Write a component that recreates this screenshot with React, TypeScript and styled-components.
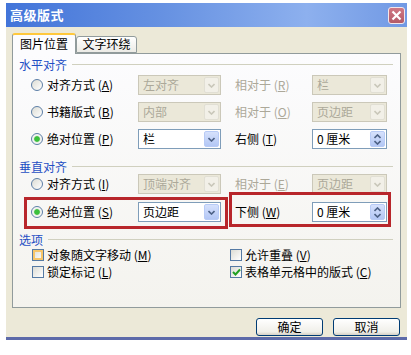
import React from 'react'
import styled, { createGlobalStyle } from 'styled-components'

const GlobalStyle = createGlobalStyle`
    html, body {
        margin: 0;
        padding: 0;
        background: #ffffff;
    }
    body {
        font-family: "Noto Sans CJK SC", "Liberation Sans", sans-serif;
        font-size: 12px;
        color: #000;
    }
`

type Line = {
    label: string
    hotkey: string
    checked: boolean
    value: string
    valueDisabled: boolean
    side: string
    sideKey: string
    sideDisabled: boolean
    sideValue: string
    spin?: boolean
    top: number
}

const horizontal: Line[] = [
    { label: '对齐方式', hotkey: 'A', checked: false, value: '左对齐', valueDisabled: true, side: '相对于', sideKey: 'R', sideDisabled: true, sideValue: '栏', top: 3 },
    { label: '书籍版式', hotkey: 'B', checked: false, value: '内部', valueDisabled: true, side: '相对于', sideKey: 'O', sideDisabled: true, sideValue: '页边距', top: 7 },
    { label: '绝对位置', hotkey: 'P', checked: true, value: '栏', valueDisabled: false, side: '右侧', sideKey: 'T', sideDisabled: false, sideValue: '0 厘米', spin: true, top: 7 },
]

const vertical: Line[] = [
    { label: '对齐方式', hotkey: 'I', checked: false, value: '顶端对齐', valueDisabled: true, side: '相对于', sideKey: 'E', sideDisabled: true, sideValue: '页边距', top: 0 },
    { label: '绝对位置', hotkey: 'S', checked: true, value: '页边距', valueDisabled: false, side: '下侧', sideKey: 'W', sideDisabled: false, sideValue: '0 厘米', spin: true, top: 8 },
]

function Chevron({ up, disabled }: { up?: boolean; disabled?: boolean }) {
    return (
        <svg width="7" height="5" viewBox="0 0 7 5">
            <path
                d={up ? 'M0.5 4 L3.5 1 L6.5 4' : 'M0.5 1 L3.5 4 L6.5 1'}
                fill="none"
                stroke={disabled ? '#c9c7ba' : '#4d6185'}
                strokeWidth="1.6"
            />
        </svg>
    )
}

function Dropdown({ value, disabled }: { value: string; disabled: boolean }) {
    return (
        <Select $disabled={disabled} $width={83}>
            <SelectValue $disabled={disabled}>{value}</SelectValue>
            <ArrowBox $disabled={disabled}>
                <Chevron disabled={disabled} />
            </ArrowBox>
        </Select>
    )
}

function SideControl({ line }: { line: Line }) {
    if (line.spin) {
        return (
            <Select $disabled={false} $width={75}>
                <SelectValue $disabled={false}>{line.sideValue}</SelectValue>
                <ArrowBox $disabled={false} $spin>
                    <Chevron up />
                    <Chevron />
                </ArrowBox>
            </Select>
        )
    }
    return (
        <Select $disabled={line.sideDisabled} $width={75}>
            <SelectValue $disabled={line.sideDisabled}>{line.sideValue}</SelectValue>
            <ArrowBox $disabled={line.sideDisabled}>
                <Chevron disabled={line.sideDisabled} />
            </ArrowBox>
        </Select>
    )
}

function OptionRow({ line }: { line: Line }) {
    return (
        <Row $top={line.top}>
            <RadioOption>
                <Radio $checked={line.checked} />
                <Label>
                    {line.label} (<u>{line.hotkey}</u>)
                </Label>
            </RadioOption>
            <Dropdown value={line.value} disabled={line.valueDisabled} />
            <SideLabel $disabled={line.sideDisabled}>
                {line.side} (<u>{line.sideKey}</u>)
            </SideLabel>
            <SideControl line={line} />
        </Row>
    )
}

export default function App() {
    return (
        <>
            <GlobalStyle />
            <Window>
                <TitleBar>
                    <Title>高级版式</Title>
                    <CloseButton>
                        <svg width="11" height="11" viewBox="0 0 11 11">
                            <path d="M1.5 1.5 L9.5 9.5 M9.5 1.5 L1.5 9.5" stroke="#fff" strokeWidth="2.2" />
                        </svg>
                    </CloseButton>
                </TitleBar>
                <Body>
                    <TabBar>
                        <Tab $active>图片位置</Tab>
                        <Tab>文字环绕</Tab>
                    </TabBar>
                    <Panel>
                        <SectionTitle $top={0}>水平对齐</SectionTitle>
                        {horizontal.map((line, key) => (
                            <OptionRow key={key} line={line} />
                        ))}
                        <SectionTitle $top={11}>垂直对齐</SectionTitle>
                        {vertical.map((line, key) => (
                            <OptionRow key={key} line={line} />
                        ))}
                        <SectionTitle $top={11}>选项</SectionTitle>
                        <CheckGrid>
                            <CheckItem>
                                <CheckBox $hover />
                                <Label>对象随文字移动 (<u>M</u>)</Label>
                            </CheckItem>
                            <CheckItem>
                                <CheckBox />
                                <Label>允许重叠 (<u>V</u>)</Label>
                            </CheckItem>
                            <CheckItem>
                                <CheckBox />
                                <Label>锁定标记 (<u>L</u>)</Label>
                            </CheckItem>
                            <CheckItem>
                                <CheckBox>
                                    <svg width="9" height="8" viewBox="0 0 9 8">
                                        <path d="M1 4 L3.5 6.5 L8 1.5" fill="none" stroke="#21a121" strokeWidth="2" />
                                    </svg>
                                </CheckBox>
                                <Label>表格单元格中的版式 (<u>C</u>)</Label>
                            </CheckItem>
                        </CheckGrid>
                        <Highlight $left={11} $top={143} $width={204} $height={32} />
                        <Highlight $left={216} $top={138} $width={162} $height={35} />
                    </Panel>
                    <ButtonBar>
                        <Button>确定</Button>
                        <Button>取消</Button>
                    </ButtonBar>
                </Body>
            </Window>
        </>
    )
}

const Window = styled.div`
    margin: 3px 0 0 6px;
    width: 401px;
`

const TitleBar = styled.div`
    height: 24px;
    display: flex;
    align-items: center;
    justify-content: space-between;
    padding: 0 2px 0 4px;
    box-sizing: border-box;
    background: linear-gradient(to right, #4274d9 0%, #6792e2 40%, #8db0ee 75%, #7199e4 100%);
`

const Title = styled.div`
    color: #fff;
    font-size: 13px;
    font-weight: 700;
    line-height: 16px;
    letter-spacing: 0.5px;
`

const CloseButton = styled.div`
    width: 17px;
    height: 17px;
    box-sizing: border-box;
    border: 1px solid #f3e6ea;
    border-radius: 3px;
    background: linear-gradient(#d07884, #b35a68);
    display: flex;
    align-items: center;
    justify-content: center;
`

const Body = styled.div`
    height: 313px;
    box-sizing: border-box;
    background: #ece9d8;
    border-bottom: 3px solid #5d6aa9;
    padding: 6px 7px 0 6px;
`

const TabBar = styled.div`
    display: flex;
    align-items: flex-end;
    height: 20px;
    position: relative;
    z-index: 1;
`

const Tab = styled.div<{ $active?: boolean }>`
    box-sizing: border-box;
    width: ${p => (p.$active ? 64 : 61)}px;
    height: ${p => (p.$active ? 21 : 17)}px;
    margin-bottom: ${p => (p.$active ? -1 : 0)}px;
    border: 1px solid #919b9c;
    border-bottom: ${p => (p.$active ? 'none' : '1px solid #919b9c')};
    border-top: ${p => (p.$active ? '2px solid #ffc83c' : '1px solid #919b9c')};
    border-radius: 3px 3px 0 0;
    background: ${p => (p.$active ? '#fcfcfe' : 'linear-gradient(#ffffff, #ecebe6)')};
    font-size: 12px;
    line-height: ${p => (p.$active ? 17 : 14)}px;
    text-align: center;
`

const Panel = styled.div`
    position: relative;
    width: 389px;
    height: 255px;
    box-sizing: border-box;
    border: 1px solid #919b9c;
    background: linear-gradient(#fcfcfe, #f4f3ee);
    padding: 4px 7px 0 6px;
`

const SectionTitle = styled.div<{ $top: number }>`
    display: flex;
    align-items: center;
    height: 14px;
    margin-top: ${p => p.$top}px;
    color: #1f4fc4;
    font-size: 12px;
    line-height: 14px;
    &::after {
        content: '';
        flex: 1;
        height: 1px;
        margin: 0 0 2px 5px;
        background: #d0d0bf;
    }
`

const Row = styled.div<{ $top: number }>`
    display: flex;
    align-items: center;
    height: 20px;
    margin-top: ${p => p.$top}px;
    padding-left: 12px;
`

const RadioOption = styled.div`
    display: flex;
    align-items: center;
    width: 107px;
    gap: 4px;
`

const Radio = styled.div<{ $checked: boolean }>`
    width: 12px;
    height: 12px;
    box-sizing: border-box;
    border-radius: 50%;
    border: 1px solid #5c7ea6;
    background: ${p =>
        p.$checked
            ? 'radial-gradient(circle, #3cc03c 0 2.4px, #8fd68f 2.8px, #f2f2ee 3.6px, #ffffff 100%)'
            : 'linear-gradient(135deg, #dcdcd4, #ffffff)'};
`

const Label = styled.span`
    font-size: 12px;
    line-height: 14px;
    white-space: nowrap;
`

const SideLabel = styled.span<{ $disabled: boolean }>`
    width: 77px;
    margin-left: 14px;
    font-size: 12px;
    line-height: 14px;
    white-space: nowrap;
    color: ${p => (p.$disabled ? '#aca899' : '#000')};
`

const Select = styled.div<{ $disabled: boolean; $width: number }>`
    display: flex;
    align-items: stretch;
    width: ${p => p.$width}px;
    height: 20px;
    box-sizing: border-box;
    border: 1px solid ${p => (p.$disabled ? '#cbc8b9' : '#7f9db9')};
    background: ${p => (p.$disabled ? '#ebe8d9' : '#ffffff')};
    padding: 1px;
`

const SelectValue = styled.div<{ $disabled: boolean }>`
    flex: 1;
    padding-left: 3px;
    font-size: 12px;
    line-height: 16px;
    white-space: nowrap;
    color: ${p => (p.$disabled ? '#aca899' : '#000')};
`

const ArrowBox = styled.div<{ $disabled: boolean; $spin?: boolean }>`
    width: 15px;
    box-sizing: border-box;
    display: flex;
    flex-direction: column;
    align-items: center;
    justify-content: center;
    gap: ${p => (p.$spin ? 1 : 0)}px;
    border: 1px solid ${p => (p.$disabled ? '#e1dfd4' : '#b8cbf6')};
    border-radius: 2px;
    background: ${p => (p.$disabled ? '#f2f0e8' : 'linear-gradient(#d6e1fc, #b3c7f5)')};
`

const CheckGrid = styled.div`
    display: grid;
    grid-template-columns: 198px auto;
    row-gap: 3px;
    margin-top: 1px;
    padding-left: 13px;
`

const CheckItem = styled.div`
    display: flex;
    align-items: center;
    gap: 3px;
    height: 14px;
`

const CheckBox = styled.div<{ $hover?: boolean }>`
    width: 12px;
    height: 12px;
    box-sizing: border-box;
    border: 1px solid #557aa4;
    display: flex;
    align-items: center;
    justify-content: center;
    background: linear-gradient(135deg, #dcdcd4, #ffffff);
    box-shadow: ${p => (p.$hover ? 'inset 0 0 0 2px #f7c66a' : 'none')};
`

const Highlight = styled.div<{ $left: number; $top: number; $width: number; $height: number }>`
    position: absolute;
    left: ${p => p.$left}px;
    top: ${p => p.$top}px;
    width: ${p => p.$width}px;
    height: ${p => p.$height}px;
    box-sizing: border-box;
    border: 3px solid #b8262b;
    pointer-events: none;
`

const ButtonBar = styled.div`
    display: flex;
    justify-content: flex-end;
    gap: 10px;
    margin-top: 10px;
`

const Button = styled.div`
    width: 67px;
    height: 18px;
    box-sizing: border-box;
    border: 1px solid #003c74;
    border-radius: 3px;
    background: linear-gradient(#ffffff, #f0efe9 80%, #d6d0c5);
    font-size: 12px;
    line-height: 16px;
    text-align: center;
`
